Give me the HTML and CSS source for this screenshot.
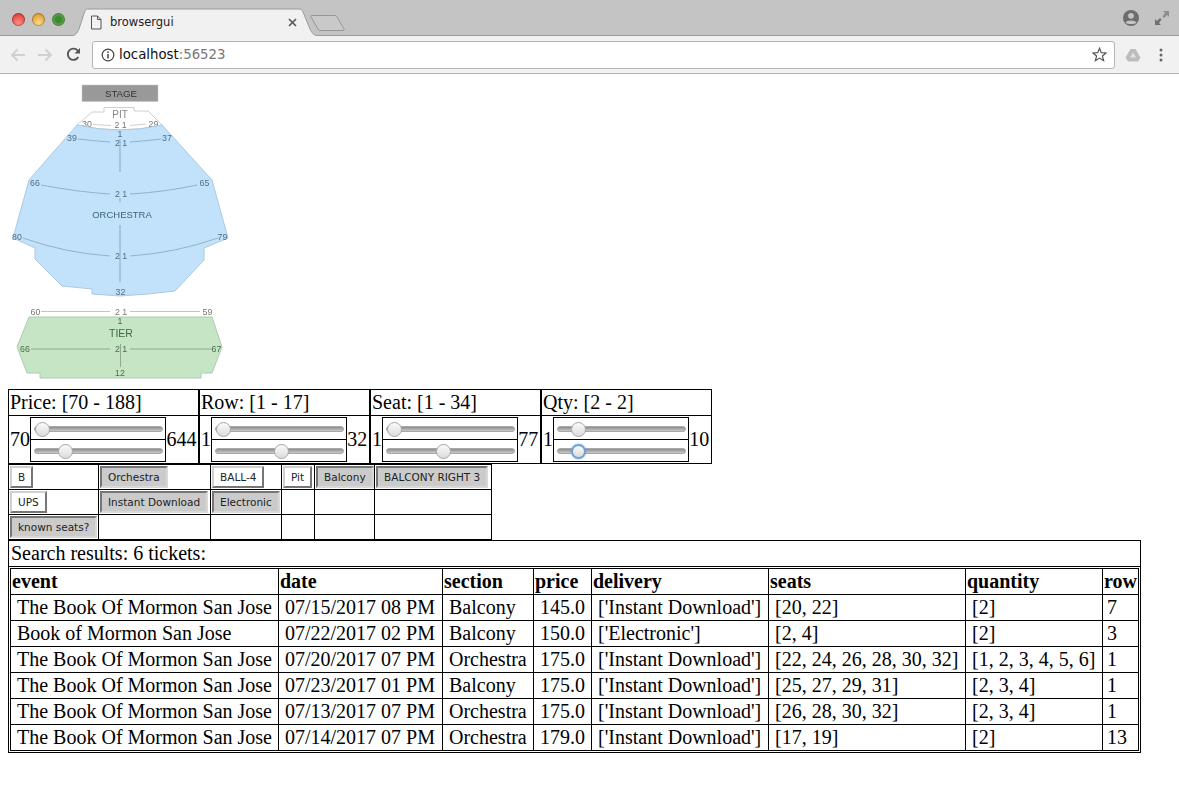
FILE: index.html
```html
<!DOCTYPE html>
<html lang="en">
<head>
  <meta charset="utf-8">
  <title>browsergui</title>
  <link rel="stylesheet" href="styles.css">
</head>
<body>

<div class="tabstrip">
  <div class="lights">
    <span class="light red"></span>
    <span class="light yellow"></span>
    <span class="light green"></span>
  </div>
  <div class="tab">
    <svg class="tabShape" width="248" height="28" viewBox="0 0 248 28">
      <path d="M1 28 C5 27 6 25 8 21 L13.500 4 C14.500 1.500 15.500 1 18 1 L227 1 C230 1 231 1.500 232 4 L239 21 C241 25 242 27 247 28" fill="#f1f1f1" stroke="#9b9b9b"/>
    </svg>
    <svg class="tabIcon" width="12" height="15" viewBox="0 0 12 15">
      <path d="M1.500 1 H7.500 L11 4.500 V14 H1.500 Z M7.500 1 V4.500 H11" fill="none" stroke="#555" stroke-width="1"/>
    </svg>
    <span class="tabTitle">browsergui</span>
    <svg class="tabClose" width="9" height="9" viewBox="0 0 9 9">
      <path d="M1 1 L8 8 M8 1 L1 8" stroke="#5a5a5a" stroke-width="1.700"/>
    </svg>
  </div>
  <svg class="newTab" width="36" height="18" viewBox="0 0 36 18">
    <path d="M1.500 1.500 H25 C26 1.500 26.500 2 27 3 L34 15 C34.500 16 34 16.500 33 16.500 H10 C9 16.500 8.500 16 8 15 L1 3 C.5 2 .8 1.500 1.500 1.500 Z" fill="#c9c9c9" stroke="#969696"/>
  </svg>
  <div class="stripRight">
    <svg width="18" height="18" viewBox="0 0 18 18">
      <circle cx="9" cy="9" r="8" fill="#6d6d6d"/>
      <circle cx="9" cy="6.800" r="2.900" fill="#c4c4c4"/>
      <path d="M3.500 13.500 C5 10.800 13 10.800 14.500 13.500 C13 15.500 5 15.500 3.500 13.500 Z" fill="#c4c4c4"/>
    </svg>
    <svg width="16" height="16" viewBox="0 0 16 16">
      <path d="M9 1 H15 V7 L13 5 L10 8 L8.500 6.500 L11 3 Z" fill="#8d8d8d"/>
      <path d="M7 15 H1 V9 L3 11 L6 8 L7.500 9.500 L5 13 Z" fill="#6f6f6f"/>
    </svg>
  </div>
</div>

<div class="toolbar">
  <svg class="navIcon" width="16" height="14" viewBox="0 0 16 14">
    <path d="M15 7 H2 M7.500 1.500 L2 7 L7.500 12.500" fill="none" stroke="#d0d0d0" stroke-width="1.800"/>
  </svg>
  <svg class="navIcon forward" width="16" height="14" viewBox="0 0 16 14">
    <path d="M1 7 H14 M8.500 1.500 L14 7 L8.500 12.500" fill="none" stroke="#d0d0d0" stroke-width="1.800"/>
  </svg>
  <svg class="navIcon" width="15" height="15" viewBox="0 0 15 15">
    <path d="M12.300 10 A5.600 5.600 0 1 1 12 4" fill="none" stroke="#555" stroke-width="1.900"/>
    <path d="M14 1 V6.500 H8.500 Z" fill="#555"/>
  </svg>
  <div class="omnibox">
    <svg width="14" height="14" viewBox="0 0 14 14">
      <circle cx="7" cy="7" r="5.800" fill="none" stroke="#444" stroke-width="1.200"/>
      <path d="M7 6 V10.500 M7 3.500 V5" stroke="#444" stroke-width="1.500"/>
    </svg>
    <span class="url">localhost<span class="port">:56523</span></span>
    <svg class="star" width="15" height="15" viewBox="0 0 15 15">
      <path d="M7.500 1.300 L9.300 5.700 L14 6 L10.400 9 L11.600 13.700 L7.500 11.100 L3.400 13.700 L4.600 9 L1 6 L5.700 5.700 Z" fill="none" stroke="#555" stroke-width="1.200"/>
    </svg>
  </div>
  <svg class="drive" width="16" height="14" viewBox="0 0 16 14">
    <path d="M5.500 1 H10.500 L15.500 9.500 L13 13.500 H3 L.5 9.500 Z" fill="#bdbdbd"/>
    <path d="M5 9.500 H11 L8 4.500 Z" fill="#e3e3e3"/>
  </svg>
  <svg class="dots" width="4" height="14" viewBox="0 0 4 14">
    <circle cx="2" cy="2" r="1.500" fill="#666"/>
    <circle cx="2" cy="7" r="1.500" fill="#666"/>
    <circle cx="2" cy="12" r="1.500" fill="#666"/>
  </svg>
</div>

<div class="page">

  <svg class="seatmap" width="230" height="315" viewBox="8 74 230 315">
    <rect x="82" y="85" width="76" height="16.500" fill="#999" stroke="#c8c8c8" stroke-width=".5"/>
    <text x="121" y="96.500" class="mapLabel stageLabel">STAGE</text>

    <path d="M77 125 L92 112 H104 V107.500 H134 V111 H148 L162 125 Q120 135 77 125 Z" fill="#fff" stroke="#cfcfcf"/>
    <text x="120" y="118" class="mapLabel pitLabel">PIT</text>
    <text x="87" y="127" class="seatNo pitNo">30</text>
    <text x="153.500" y="127" class="seatNo pitNo">29</text>
    <text x="120.500" y="128" class="seatNo pitNo">2 1</text>
    <path d="M93 124.500 L111 125.500 M130 125.500 L146 124" stroke="#cfcfcf" fill="none"/>

    <path d="M77 125 Q120 135 162 125 L212 180 L228 238 L204 248 V260 L175 291 L148 294 L120 296 L92 294 V289 L62 286 L35 259 V248 L13 238 L29 180 Z" fill="#c2e2fb" stroke="#aac9df"/>
    <path d="M120 139 V172 M120 198 V202 M120 225 V282" stroke="#93b2c9" stroke-width="1.200" fill="none"/>
    <path d="M78 139 Q95 141 110 142 M130 142 Q145 141 161 139" stroke="#93b2c9" fill="none"/>
    <path d="M41 185 Q78 192 110 194 M130 194 Q165 192 197 185" stroke="#93b2c9" fill="none"/>
    <path d="M23 238 Q65 253 110 256 M130 256 Q175 253 218 238" stroke="#93b2c9" fill="none"/>
    <text x="120" y="136.500" class="seatNo">1</text>
    <text x="121" y="146" class="seatNo">2 1</text>
    <text x="72" y="141" class="seatNo">39</text>
    <text x="167" y="141" class="seatNo">37</text>
    <text x="35" y="186" class="seatNo">66</text>
    <text x="204.500" y="186" class="seatNo">65</text>
    <text x="121" y="197" class="seatNo">2 1</text>
    <text x="122" y="218" class="mapLabel orchLabel">ORCHESTRA</text>
    <text x="17" y="240" class="seatNo">80</text>
    <text x="222.500" y="240" class="seatNo">79</text>
    <text x="121" y="259" class="seatNo">2 1</text>
    <text x="120.500" y="295" class="seatNo">32</text>

    <path d="M41 311.500 H110 M130 311.500 H200" stroke="#c4c4c4" fill="none"/>
    <text x="35.500" y="315" class="seatNo greyNo">60</text>
    <text x="207.500" y="315" class="seatNo greyNo">59</text>
    <text x="121" y="315" class="seatNo greyNo">2 1</text>

    <path d="M29 317 H212 L222 347 L212 373 H201 V378 H40 V373 H27 L17 347 Z" fill="#c5e5c5" stroke="#aecbae"/>
    <path d="M31 349 H110 M130 349 H212 M120.500 344 V367" stroke="#8fab8f" fill="none"/>
    <text x="120" y="324" class="seatNo tierNo">1</text>
    <text x="121" y="337" class="mapLabel tierLabel">TIER</text>
    <text x="25" y="352" class="seatNo tierNo">66</text>
    <text x="216.500" y="352" class="seatNo tierNo">67</text>
    <text x="121" y="352" class="seatNo tierNo">2 1</text>
    <text x="120" y="376" class="seatNo tierNo">12</text>
  </svg>

  <div class="sliders">
    <table class="sliderTable price">
      <tr><td colspan="3">Price: [70 - 188]</td></tr>
      <tr>
        <td class="limit">70</td>
        <td class="rangeCell">
          <table class="rangePair">
            <tr><td><input type="range" min="70" max="644" value="70"></td></tr>
            <tr><td><input type="range" min="70" max="644" value="188"></td></tr>
          </table>
        </td>
        <td class="limit">644</td>
      </tr>
    </table>
    <table class="sliderTable row">
      <tr><td colspan="3">Row: [1 - 17]</td></tr>
      <tr>
        <td class="limit">1</td>
        <td class="rangeCell">
          <table class="rangePair">
            <tr><td><input type="range" min="1" max="32" value="1"></td></tr>
            <tr><td><input type="range" min="1" max="32" value="17"></td></tr>
          </table>
        </td>
        <td class="limit">32</td>
      </tr>
    </table>
    <table class="sliderTable seat">
      <tr><td colspan="3">Seat: [1 - 34]</td></tr>
      <tr>
        <td class="limit">1</td>
        <td class="rangeCell">
          <table class="rangePair">
            <tr><td><input type="range" min="1" max="77" value="1"></td></tr>
            <tr><td><input type="range" min="1" max="77" value="34"></td></tr>
          </table>
        </td>
        <td class="limit">77</td>
      </tr>
    </table>
    <table class="sliderTable qty">
      <tr><td colspan="3">Qty: [2 - 2]</td></tr>
      <tr>
        <td class="limit">1</td>
        <td class="rangeCell">
          <table class="rangePair">
            <tr><td><input type="range" min="1" max="10" value="2"></td></tr>
            <tr><td><input class="focused" type="range" min="1" max="10" value="2"></td></tr>
          </table>
        </td>
        <td class="limit">10</td>
      </tr>
    </table>
  </div>

  <table class="filters">
    <colgroup>
      <col class="f1"><col class="f2"><col class="f3"><col class="f4"><col class="f5"><col class="f6">
    </colgroup>
    <tr>
      <td><button>B</button></td>
      <td><button class="on">Orchestra</button></td>
      <td><button>BALL-4</button></td>
      <td><button>Pit</button></td>
      <td><button class="on">Balcony</button></td>
      <td><button class="on">BALCONY RIGHT 3</button></td>
    </tr>
    <tr>
      <td><button>UPS</button></td>
      <td><button class="on">Instant Download</button></td>
      <td><button class="on">Electronic</button></td>
      <td></td><td></td><td></td>
    </tr>
    <tr>
      <td><button class="on">known seats?</button></td>
      <td></td><td></td><td></td><td></td><td></td>
    </tr>
  </table>

  <table class="results">
    <tr><td class="resultsTitle">Search results: 6 tickets:</td></tr>
    <tr>
      <td class="resultsBody">
        <table class="tickets">
          <colgroup>
            <col class="cEvent"><col class="cDate"><col class="cSection"><col class="cPrice"><col class="cDelivery"><col class="cSeats"><col class="cQuantity"><col class="cRow">
          </colgroup>
          <tr><th>event</th><th>date</th><th>section</th><th>price</th><th>delivery</th><th>seats</th><th>quantity</th><th>row</th></tr>
          <tr><td>The Book Of Mormon San Jose</td><td>07/15/2017 08 PM</td><td>Balcony</td><td>145.0</td><td>['Instant Download']</td><td>[20, 22]</td><td>[2]</td><td class="rowNo">7</td></tr>
          <tr><td>Book of Mormon San Jose</td><td>07/22/2017 02 PM</td><td>Balcony</td><td>150.0</td><td>['Electronic']</td><td>[2, 4]</td><td>[2]</td><td class="rowNo">3</td></tr>
          <tr><td>The Book Of Mormon San Jose</td><td>07/20/2017 07 PM</td><td>Orchestra</td><td>175.0</td><td>['Instant Download']</td><td>[22, 24, 26, 28, 30, 32]</td><td>[1, 2, 3, 4, 5, 6]</td><td class="rowNo">1</td></tr>
          <tr><td>The Book Of Mormon San Jose</td><td>07/23/2017 01 PM</td><td>Balcony</td><td>175.0</td><td>['Instant Download']</td><td>[25, 27, 29, 31]</td><td>[2, 3, 4]</td><td class="rowNo">1</td></tr>
          <tr><td>The Book Of Mormon San Jose</td><td>07/13/2017 07 PM</td><td>Orchestra</td><td>175.0</td><td>['Instant Download']</td><td>[26, 28, 30, 32]</td><td>[2, 3, 4]</td><td class="rowNo">1</td></tr>
          <tr><td>The Book Of Mormon San Jose</td><td>07/14/2017 07 PM</td><td>Orchestra</td><td>179.0</td><td>['Instant Download']</td><td>[17, 19]</td><td>[2]</td><td class="rowNo">13</td></tr>
        </table>
      </td>
    </tr>
  </table>

</div>
</body>
</html>
```

FILE: styles.css
```css
body {
  margin: 0;
  background: white;
  color: black;
  font-family: "Liberation Serif", serif;
  font-size: 20px;
  line-height: 23px;
}

table {
  border-collapse: collapse;
}

td {
  padding: 1px;
  border: solid 1px black;
}

/* browser window */
.tabstrip {
  height: 36px;
  background: #c4c4c4;
  border-bottom: solid 1px #9b9b9b;
  box-sizing: border-box;
  display: flex;
  align-items: flex-end;
}

.lights {
  width: 71px;
  height: 35px;
  padding: 3px 0 0 12px;
  box-sizing: border-box;
  display: flex;
  align-items: center;
  gap: 7px;
  flex: none;
}

.light {
  width: 13px;
  height: 13px;
  border-radius: 50%;
  box-shadow: inset 0 0 0 1px rgba(0, 0, 0, 0.25);
}

.red {
  background: radial-gradient(circle at 50% 75%, #ff8f85, #e0443e 70%);
}

.yellow {
  background: radial-gradient(circle at 50% 75%, #ffd98a, #dea034 70%);
}

.green {
  background: radial-gradient(circle at 50% 50%, #3c8a2c 30%, #7db36a 80%);
}

.tab {
  position: relative;
  width: 248px;
  height: 28px;
  margin-bottom: -1px;
  padding: 0 22px 0 18px;
  box-sizing: border-box;
  display: flex;
  align-items: center;
  flex: none;
  font-family: "DejaVu Sans", sans-serif;
  font-size: 11.500px;
  line-height: 14px;
  color: #222;
}

.tabShape {
  position: absolute;
  left: 0;
  top: 0;
}

.tabIcon {
  position: relative;
  margin-left: 1px;
}

.tabTitle {
  position: relative;
  margin-left: 8px;
  flex: 1;
}

.tabClose {
  position: relative;
}

.newTab {
  margin: 0 0 3px -9px;
  flex: none;
}

.stripRight {
  margin-left: auto;
  height: 35px;
  padding-right: 9px;
  display: flex;
  align-items: center;
  gap: 14px;
}

.toolbar {
  height: 38px;
  background: #f1f1f1;
  border-bottom: solid 1px #b4b4b4;
  box-sizing: border-box;
  display: flex;
  align-items: center;
  padding: 0 16px 0 10px;
}

.navIcon {
  margin-right: 11px;
  flex: none;
}

.forward {
  margin-right: 13px;
}

.omnibox {
  width: 1023px;
  height: 28px;
  padding: 0 7px 0 8px;
  background: white;
  border: solid 1px #b5b5b5;
  border-radius: 3px;
  box-sizing: border-box;
  display: flex;
  align-items: center;
  flex: none;
}

.url {
  margin-left: 4px;
  font-family: "DejaVu Sans", sans-serif;
  font-size: 13.300px;
  line-height: 16px;
  color: #111;
}

.port {
  color: #777;
}

.star {
  margin-left: auto;
}

.drive {
  margin-left: 10px;
}

.dots {
  margin-left: 18px;
}

/* page */
.page {
  padding: 0 8px;
}

.seatmap {
  display: block;
  filter: blur(0.35px);
}

.mapLabel,
.seatNo {
  font-family: "Liberation Sans", sans-serif;
  text-anchor: middle;
}

.seatNo {
  font-size: 8.800px;
  fill: #4f6f88;
}

.greyNo,
.pitNo {
  fill: #777;
}

.tierNo {
  fill: #4e6b4e;
}

.stageLabel {
  font-size: 9.700px;
  fill: #333;
}

.pitLabel {
  font-size: 10px;
  fill: #888;
}

.orchLabel {
  font-size: 9.500px;
  fill: #3d6480;
}

.tierLabel {
  font-size: 10.500px;
  fill: #3f6a3f;
}

/* sliders */
.sliders {
  display: flex;
  align-items: flex-start;
}

.sliderTable {
  flex: none;
}

.sliderTable > tbody > tr > td {
  height: 23px;
}

.price {
  width: 191px;
}

.row,
.seat,
.qty {
  width: 171px;
}

.limit {
  border-right: none;
  border-left: none;
  padding: 0 0 0 1px;
}

.sliderTable .limit:first-child {
  border-left: solid 1px black;
}

.sliderTable .limit:last-child {
  border-right: solid 1px black;
  padding: 0 1px 0 0;
}

.rangeCell {
  width: 135px;
  padding: 1px 0;
  border-left: none;
  border-right: none;
}

.rangePair {
  width: 135px;
}

.rangePair td {
  height: 21px;
  padding: 0 2px;
  line-height: 0;
}

input[type=range] {
  -webkit-appearance: none;
  appearance: none;
  display: block;
  width: 129px;
  height: 16px;
  margin: 0 0 0 1px;
  background: transparent;
  outline: none;
}

input[type=range]::-webkit-slider-runnable-track {
  height: 6px;
  border-radius: 3px;
  background: linear-gradient(#8c8c8c, #c9c9c9);
  border: solid 0.500px #a8a8a8;
}

input[type=range]::-webkit-slider-thumb {
  -webkit-appearance: none;
  width: 15px;
  height: 15px;
  margin-top: -5px;
  border-radius: 50%;
  background: linear-gradient(#fafafa, #dcdcdc);
  border: solid 1px #a5a5a5;
  box-sizing: border-box;
}

input.focused::-webkit-slider-thumb {
  border: solid 2px #6f9fd8;
  box-shadow: 0 0 2px #6f9fd8;
}

/* filter buttons */
.filters {
  table-layout: fixed;
  width: 483px;
}

.filters td {
  height: 22px;
  padding: 1px;
  line-height: 0;
}

.f1 { width: 90px; }
.f2 { width: 112px; }
.f3 { width: 71px; }
.f4 { width: 33px; }
.f5 { width: 60px; }
.f6 { width: 117px; }

button {
  height: 22px;
  padding: 0 6px;
  font-family: "DejaVu Sans", sans-serif;
  font-size: 10.500px;
  line-height: 14px;
  color: #222;
  background: white;
  border: solid 2px;
  border-color: #d0d0d0 #767676 #767676 #d0d0d0;
  white-space: nowrap;
}

button.on {
  background: #cbcbcb;
  border-color: #767676 #d8d8d8 #d8d8d8 #767676;
}

/* results */
.results {
  width: 1133px;
}

.resultsTitle {
  height: 23px;
  padding: 1px 1px 1px 2px;
}

.resultsBody {
  padding: 1px;
}

.tickets {
  table-layout: fixed;
  width: 1129px;
}

.tickets th {
  height: 23px;
  padding: 1px;
  border: solid 1px black;
  text-align: left;
}

.tickets td {
  height: 25px;
  padding: 0 0 0 6px;
  white-space: nowrap;
}

.tickets td.rowNo {
  padding-left: 4px;
}

.cEvent { width: 268px; }
.cDate { width: 164px; }
.cSection { width: 91px; }
.cPrice { width: 58px; }
.cDelivery { width: 177px; }
.cSeats { width: 197px; }
.cQuantity { width: 137px; }
.cRow { width: 36px; }
```
